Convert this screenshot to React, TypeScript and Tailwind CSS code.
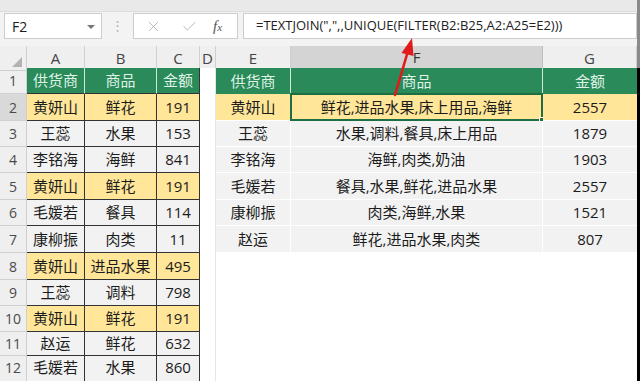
import { X, Check } from "lucide-react";

const cols = "grid grid-cols-[27px_58px_72px_43px_16px_75px_252px_94px]";
const font = "font-['Open_Sans','Noto_Sans_CJK_SC',sans-serif]";

type Row = {
  n: string;
  h: string;
  left: [string, string, string];
  right?: [string, string, string];
  yellow?: boolean;
};

const rows: Row[] = [
  { n: "2", h: "h-[27px]", left: ["黄妍山", "鲜花", "191"], right: ["黄妍山", "鲜花,进品水果,床上用品,海鲜", "2557"], yellow: true },
  { n: "3", h: "h-[26px]", left: ["王蕊", "水果", "153"], right: ["王蕊", "水果,调料,餐具,床上用品", "1879"] },
  { n: "4", h: "h-[26px]", left: ["李铭海", "海鲜", "841"], right: ["李铭海", "海鲜,肉类,奶油", "1903"] },
  { n: "5", h: "h-[27px]", left: ["黄妍山", "鲜花", "191"], right: ["毛媛若", "餐具,水果,鲜花,进品水果", "2557"], yellow: true },
  { n: "6", h: "h-[26px]", left: ["毛媛若", "餐具", "114"], right: ["康柳振", "肉类,海鲜,水果", "1521"] },
  { n: "7", h: "h-[27px]", left: ["康柳振", "肉类", "11"], right: ["赵运", "鲜花,进品水果,肉类", "807"] },
  { n: "8", h: "h-[27px]", left: ["黄妍山", "进品水果", "495"], yellow: true },
  { n: "9", h: "h-[26px]", left: ["王蕊", "调料", "798"] },
  { n: "10", h: "h-[26px]", left: ["黄妍山", "鲜花", "191"], yellow: true },
  { n: "11", h: "h-[24px]", left: ["赵运", "鲜花", "632"] },
  { n: "12", h: "h-[22px]", left: ["毛媛若", "水果", "860"] },
  { n: "13", h: "h-[22px]", left: ["李铭海", "海鲜", "327"] },
];

const headers = ["A", "B", "C", "D", "E", "F", "G"];

function RowHead({ n, sel }: { n: string; sel?: boolean }) {
  return (
    <div
      className={`flex items-center justify-center border-r border-b border-[#d0d0d0] text-[14px] text-[#4a4a4a] ${
        sel ? "bg-[#d9d9d9]" : "bg-[#efefef]"
      }`}
    >
      {n}
    </div>
  );
}

export default function App() {
  const yellow = "bg-[#ffe699]";
  const gray = "bg-[#f2f2f2]";

  return (
    <div className={`relative flex h-[381px] w-[640px] overflow-hidden bg-white ${font} text-[#1c1c1c]`}>
      <div className="flex w-[637px] shrink-0 flex-col">
        <div className="h-[12px] shrink-0 border-b border-[#dcdcdc] bg-[#e9e9e9]" />
        <div className="flex h-[34px] shrink-0 items-start bg-[#f3f3f3] pt-[1px]">
          <div className="ml-[4px] flex h-[26px] w-[98px] items-center justify-between border border-[#cdcdcd] bg-white pl-[7px] pr-[6px] text-[14px]">
            <span>F2</span>
            <span className="mt-[2px] h-0 w-0 border-x-[4px] border-t-[4px] border-x-transparent border-t-[#777]" />
          </div>
          <div className="flex h-[26px] w-[31px] items-center justify-center text-[13px] text-[#b5b5b5]">⋮</div>
          <div className="flex h-[26px] w-[105px] items-center border border-[#cdcdcd] bg-white">
            <X size={17} strokeWidth={1.4} className="ml-[11px] text-[#b8b8b8]" />
            <Check size={17} strokeWidth={1.4} className="ml-[19px] text-[#b8b8b8]" />
            <span className="ml-[15px] font-['Liberation_Serif',serif] text-[15px] italic text-[#555]">
              f<span className="text-[11px]">x</span>
            </span>
          </div>
          <div className="ml-[5px] flex h-[26px] flex-1 items-center border border-[#cdcdcd] bg-white pl-[12px] text-[13px] text-[#222]">
            =TEXTJOIN(",",,UNIQUE(FILTER(B2:B25,A2:A25=E2)))
          </div>
        </div>

        {/* column headers */}
        <div className={`${cols} h-[22px] shrink-0 bg-[#efefef] text-[15px] text-[#444]`}>
          <div className="relative border-r border-b border-[#cfcfcf]">
            <svg className="absolute right-[4px] bottom-[3px]" width="10" height="10" viewBox="0 0 10 10">
              <polygon points="10,0 10,10 0,10" fill="#b3b3b3" />
            </svg>
          </div>
          {headers.map((h) => (
            <div
              key={h}
              className={`flex items-center justify-center border-r ${
                h === "F"
                  ? "border-b-2 border-b-[#217346] border-r-[#bdbdbd] bg-[#d4d4d4] text-[#333]"
                  : "border-b border-[#cfcfcf]"
              }`}
            >
              {h}
            </div>
          ))}
        </div>

        {/* row 1: headers */}
        <div className={`${cols} h-[26px] shrink-0 text-[15px]`}>
          <RowHead n="1" />
          {["供货商", "商品", "金额"].map((t, i) => (
            <div
              key={t}
              className={`flex items-center justify-center border-b border-[#333] bg-[#2b8a5a] text-[#dff3e6] ${
                i < 2 ? "border-r border-r-[#cfe9da]" : "border-r border-r-[#333]"
              }`}
            >
              {t}
            </div>
          ))}
          <div className="border-r border-[#e6e6e6] bg-white" />
          {["供货商", "商品", "金额"].map((t, i) => (
            <div
              key={"r" + t}
              className={`flex items-center justify-center bg-[#2b8a5a] text-[#dff3e6] ${
                i < 2 ? "border-r border-[#cfe9da]" : ""
              }`}
            >
              {t}
            </div>
          ))}
        </div>

        {rows.map((r) => (
          <div key={r.n} className={`${cols} ${r.h} shrink-0 text-[15px]`}>
            <RowHead n={r.n} sel={r.n === "2"} />
            {r.left.map((t, i) => (
              <div
                key={i}
                className={`flex items-center justify-center whitespace-nowrap border-r border-b border-[#333] ${
                  r.yellow ? yellow : gray
                }`}
              >
                {t}
              </div>
            ))}
            <div className="border-r border-[#e6e6e6] bg-white" />
            {r.right ? (
              r.right.map((t, i) => (
                <div
                  key={"r" + i}
                  className={`relative flex items-center justify-center whitespace-nowrap border-b border-white ${
                    i < 2 ? "border-r" : ""
                  } ${r.n === "2" ? yellow : gray}`}
                >
                  {t}
                  {r.n === "2" && i === 1 && (
                    <>
                      <div className="absolute -top-px -left-px -right-px -bottom-px border-2 border-[#1e6e44]" />
                      <div className="absolute -right-[4px] -bottom-[4px] h-[7px] w-[7px] border border-white bg-[#1e6e44]" />
                    </>
                  )}
                </div>
              ))
            ) : (
              <>
                <div className="bg-white" />
                <div className="bg-white" />
                <div className="bg-white" />
              </>
            )}
          </div>
        ))}
      </div>
      <div className="flex w-[3px] shrink-0 flex-col">
        <div className="h-[68px] bg-[#8a8a8a]" />
        <div className="flex-1 bg-black" />
      </div>

      <svg className="pointer-events-none absolute top-0 left-0" width="640" height="381">
        <line x1="395" y1="95" x2="408" y2="51" stroke="#e11b1b" strokeWidth="2.6" strokeLinecap="round" />
        <polygon points="412,38 401.5,53 413.5,56" fill="#e11b1b" />
      </svg>
    </div>
  );
}
